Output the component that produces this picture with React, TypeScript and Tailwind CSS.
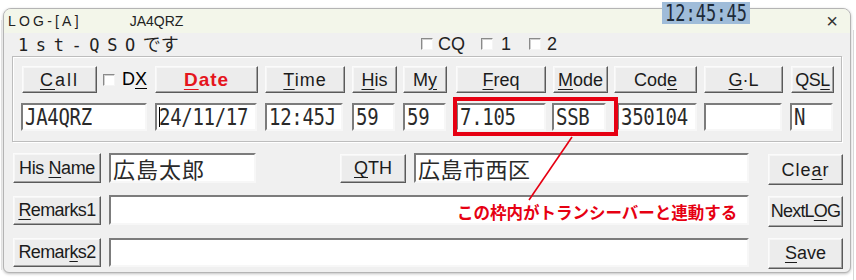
import React from "react";

const ui = { fontFamily: '"Liberation Sans", "Noto Sans CJK JP", sans-serif' };
const mono = { fontFamily: '"DejaVu Sans Mono", "Noto Sans CJK JP", monospace' };
const jp = { fontFamily: '"Noto Sans CJK JP", "Noto Sans", sans-serif' };

type BoxProps = { className?: string; children?: React.ReactNode };

const Btn = ({ className = "", children }: BoxProps) => (
  <div
    className={`flex shrink-0 items-center justify-center bg-[#ececec] border border-t-[#fbfbfb] border-l-[#fbfbfb] border-r-[#5a5a5a] border-b-[#5a5a5a] shadow-[inset_-1px_-1px_0_#a3a3a3,inset_1px_1px_0_#f6f6f6] text-[#1b1b1b] text-[18px] leading-none ${className}`}
    style={ui}
  >
    <span className="whitespace-pre">{children}</span>
  </div>
);

const Field = ({ className = "", children }: BoxProps) => (
  <div
    className={`flex shrink-0 items-center overflow-hidden bg-white border-2 border-t-[#7c7c7c] border-l-[#7c7c7c] border-b-[#f7f7f7] border-r-[#f7f7f7] pl-[2px] text-[#2a2a2a] ${className}`}
  >
    {children}
  </div>
);

const Mono = ({ children }: { children: React.ReactNode }) => (
  <span className="inline-block scale-y-[1.22] text-[19px] leading-none tracking-[-0.3px]" style={mono}>
    {children}
  </span>
);

const Check = () => (
  <span className="inline-block w-[12px] h-[12px] bg-white border border-t-[#8a8a8a] border-l-[#8a8a8a] border-b-[#f5f5f5] border-r-[#f5f5f5] shadow-[inset_1px_1px_0_#d0d0d0]" />
);

const U = ({ children }: { children: React.ReactNode }) => (
  <span className="underline underline-offset-[3px] decoration-1">{children}</span>
);

export default function App() {
  return (
    <div className="relative w-[856px] h-[280px] overflow-hidden bg-white">
      {/* faint sheet behind the dialog */}
      <div className="absolute right-[2px] top-[30px] h-[250px] w-px bg-[#d8d8d8]" />
      <div className="absolute left-[1px] top-[20px] h-[250px] w-px bg-[#e0e0e0]" />

      <div className="ml-[3px] mt-[8px] w-[848px] h-[265px] rounded-t-[8px] rounded-b-[6px] border border-[#b4b4b4] bg-[#f0f0f0] overflow-hidden shadow-[0_1px_3px_rgba(0,0,0,0.25)]">
        {/* title bar */}
        <div className="flex h-[24px] items-center bg-[#f3f6ea] text-[14px] text-[#222]" style={ui}>
          <span className="pl-[4px] tracking-[3.2px]">LOG-[A]</span>
          <span className="ml-[48px]">JA4QRZ</span>
          <span className="ml-auto mr-[12px] text-[20px] leading-none font-light text-[#333]">×</span>
        </div>

        {/* 1st QSO line */}
        <div className="flex h-[22px] items-center text-[#222]">
          <span className="w-[417px] pl-[14px] text-[18px] leading-none" style={jp}>
            <span className="tracking-[7.6px] text-[17px]" style={mono}>1st-QSO</span>
            <span>です</span>
          </span>
          <div className="flex items-center text-[18px] leading-none" style={ui}>
            <Check />
            <span className="ml-[5px]">CQ</span>
            <span className="ml-[16px]"><Check /></span>
            <span className="ml-[8px]">1</span>
            <span className="ml-[18px]"><Check /></span>
            <span className="ml-[6px]">2</span>
          </div>
        </div>

        {/* group box */}
        <div className="ml-[8px] mt-[1px] w-[830px] h-[86px] border border-[#bdbdbd] shadow-[inset_1px_1px_0_#fff,1px_1px_0_#fff] pt-[9px] pl-[8px]">
          <div className="flex h-[27px] ml-[1px]">
            <Btn className="w-[75px] tracking-[2px]"><U>C</U>all</Btn>
            <div className="ml-[6px] flex w-[45px] items-center text-[18px]" style={ui}>
              <Check />
              <span className="ml-[7px]">D<U>X</U></span>
            </div>
            <Btn className="ml-[7px] w-[103px] font-bold text-[19px] text-[#e5151d] tracking-[1px]"><U>D</U>ate</Btn>
            <Btn className="ml-[7px] w-[80px] tracking-[1px]"><U>T</U>ime</Btn>
            <Btn className="ml-[7px] w-[45px]"><U>H</U>is</Btn>
            <Btn className="ml-[6px] w-[44px]">M<U>y</U></Btn>
            <Btn className="ml-[9px] w-[90px]"><U>F</U>req</Btn>
            <Btn className="ml-[7px] w-[55px]"><U>M</U>ode</Btn>
            <Btn className="ml-[6px] w-[83px]">Cod<U>e</U></Btn>
            <Btn className="ml-[7px] w-[79px]"><U>G</U>·L</Btn>
            <Btn className="ml-[8px] w-[43px] tracking-[-0.5px]">QS<U>L</U></Btn>
          </div>
          <div className="mt-[10px] flex h-[28px]">
            <Field className="w-[126px]"><Mono>JA4QRZ</Mono></Field>
            <Field className="ml-[8px] w-[102px]">
              <span className="mr-[-1px] h-[20px] w-px bg-black" />
              <Mono>24/11/17</Mono>
            </Field>
            <Field className="ml-[8px] w-[78px]"><Mono>12:45J</Mono></Field>
            <Field className="ml-[9px] w-[43px]"><Mono>59</Mono></Field>
            <Field className="ml-[8px] w-[43px]"><Mono>59</Mono></Field>
            <Field className="ml-[10px] w-[90px]"><Mono>7.105</Mono></Field>
            <Field className="ml-[6px] w-[54px]"><Mono>SSB</Mono></Field>
            <Field className="ml-[11px] w-[80px]"><Mono>350104</Mono></Field>
            <Field className="ml-[7px] w-[78px]" />
            <Field className="ml-[8px] w-[43px]"><Mono>N</Mono></Field>
          </div>
        </div>

        {/* lower rows */}
        <div className="mt-[11px] flex h-[30px] items-center pl-[9px]">
          <Btn className="w-[88px] h-[30px] tracking-[-0.4px]">His <U>N</U>ame</Btn>
          <Field className="ml-[8px] w-[147px] h-[30px]">
            <span className="text-[22px] leading-none tracking-[1px]" style={jp}>広島太郎</span>
          </Field>
          <Btn className="ml-[84px] w-[66px] h-[29px]"><U>Q</U>TH</Btn>
          <Field className="ml-[8px] w-[335px] h-[30px]">
            <span className="text-[22px] leading-none tracking-[0.5px]" style={jp}>広島市西区</span>
          </Field>
          <Btn className="ml-[19px] w-[75px] h-[31px] mt-[3px] tracking-[1px]">Cle<U>a</U>r</Btn>
        </div>
        <div className="mt-[12px] flex h-[30px] items-center pl-[9px]">
          <Btn className="w-[88px] h-[29px] tracking-[-0.6px]"><U>R</U>emarks1</Btn>
          <Field className="ml-[8px] w-[640px] h-[30px]" />
          <Btn className="ml-[19px] w-[75px] h-[31px] mt-[2px] tracking-[-0.8px]">NextL<U>O</U>G</Btn>
        </div>
        <div className="mt-[12px] flex h-[30px] items-center pl-[9px]">
          <Btn className="w-[88px] h-[29px] tracking-[-0.6px]">Remar<U>k</U>s2</Btn>
          <Field className="ml-[8px] w-[640px] h-[29px]" />
          <Btn className="ml-[19px] w-[75px] h-[31px] mt-[2px]"><U>S</U>ave</Btn>
        </div>
      </div>

      {/* clock overlay */}
      <div className="absolute left-[662px] top-[2px] flex h-[22px] w-[88px] items-center justify-center bg-[#9fbcd9]">
        <span className="inline-block scale-y-[1.3] text-[17px] leading-none text-[#1d2a38]" style={mono}>12:45:45</span>
      </div>

      {/* annotation */}
      <div className="absolute left-[453px] top-[97px] h-[39px] w-[165px] border-4 border-[#e60012]" />
      <svg className="absolute left-0 top-0" width="856" height="280">
        <line x1="572" y1="137" x2="529" y2="200" stroke="#e60012" strokeWidth="1.6" />
      </svg>
      <div className="absolute left-[457px] top-[202px] text-[16.5px] font-bold leading-[20px] text-[#e60012]" style={jp}>
        この枠内がトランシーバーと連動する
      </div>
    </div>
  );
}
